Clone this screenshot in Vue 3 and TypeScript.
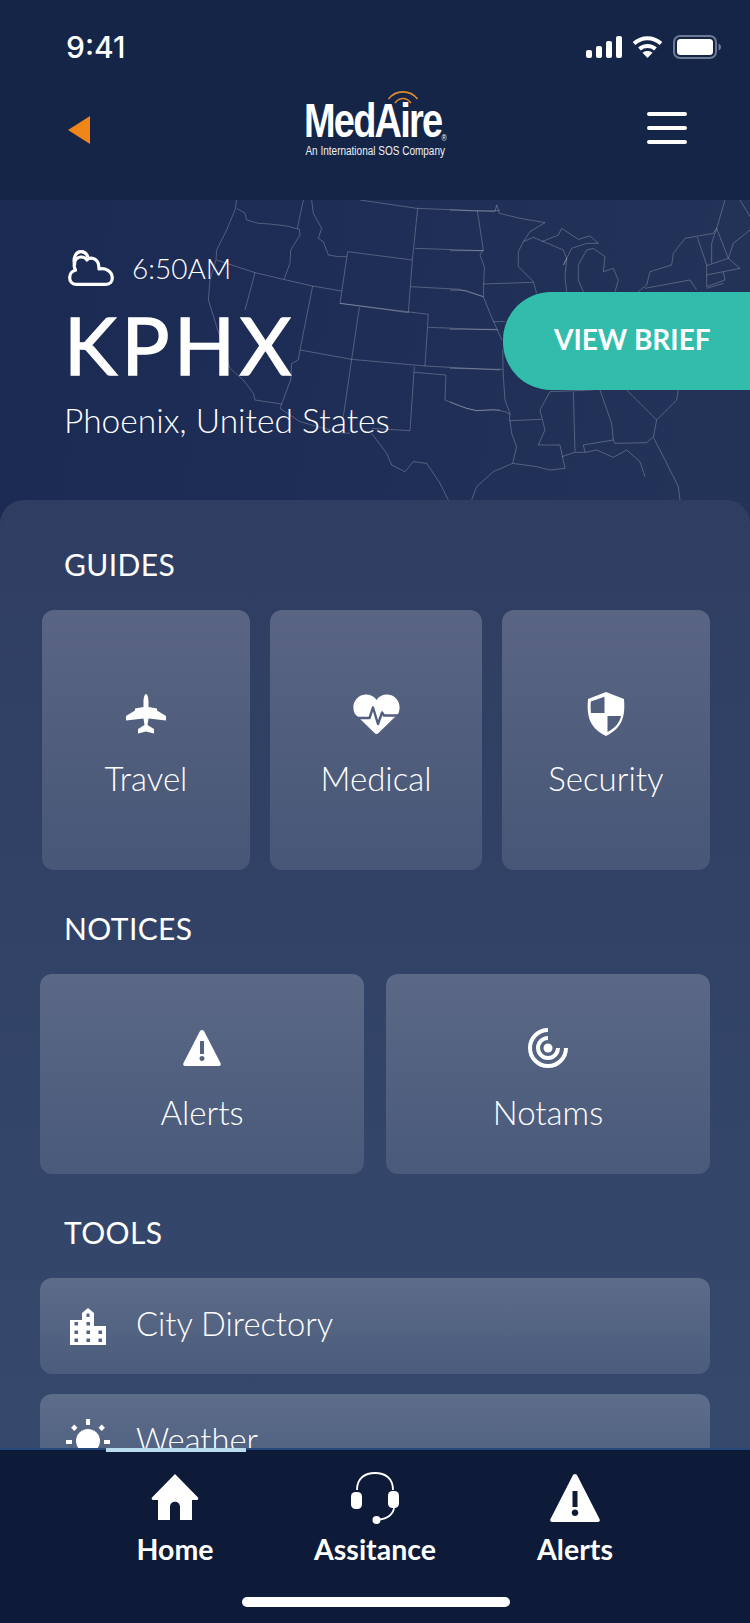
<script setup lang="ts">
const mapWest: string[] = [
  'M110 25L135 40L140 60L175 70L210 72L260 78L298 88',
  'M110 0L105 30L80 90L50 150L48 180L30 240L25 300L50 380L90 505L130 540L160 580L165 600L245 612',
  'M298 88L300 105L272 150L270 190L252 238',
  'M310 0L292 85',
  'M335 0L340 40L365 85L355 115L370 125L385 165L415 170L440 170',
  'M443 155L637 180L625 338L420 310Z',
  'M50 180L165 218L250 238L338 258L424 273',
  'M165 218L135 330',
  'M338 258L300 450L295 480L275 490L272 540L255 585L245 612L240 625L300 665L420 698L450 700',
  'M478 322L455 478L430 650',
  'M420 310L685 343L675 498',
  'M300 450L455 478L675 498L900 510',
  'M643 500L630 692L515 685',
  'M515 700L560 760L575 795L615 815L640 785L680 790L720 850L745 900',
  'M643 517L738 525L735 600L770 615L800 625L830 632L900 630',
  'M653 25L637 180',
  'M480 0L650 25L830 32L900 32',
  'M645 145L850 152',
  'M632 260L780 268L800 275L850 290',
  'M685 382L895 390',
]
const mapEast: string[] = [
  'M0 30L135 35L140 15L148 40L210 55L285 68L240 95L220 125',
  'M82 32L100 150L90 165L103 200L100 290',
  'M0 152L100 152',
  'M0 270L50 272L100 290L120 340L140 385L155 420',
  'M100 252L250 247',
  'M205 200L250 245L260 280',
  'M220 125L205 155L205 200',
  'M220 125L250 112L340 150L350 175L340 195L365 145L410 130L445 130L420 108L385 118L335 85L325 105L275 125',
  'M350 175L345 230L350 275',
  'M385 240L385 195L410 150L430 145L465 170L460 215L490 205L505 240L495 275',
  'M385 240L400 275',
  'M130 365L165 365',
  'M0 388L140 388',
  'M0 505L158 508',
  'M158 450L160 530L165 600L180 640L178 662L275 658',
  'M0 605L50 625L80 632L130 628L165 635L180 642',
  'M180 662L185 700L200 740L188 790L260 800L300 810L345 805L330 735L265 735L285 690L270 630L300 575L430 570',
  'M370 575L375 755',
  'M335 770L375 757L405 757L400 735L490 720L495 730L590 728L608 712',
  'M450 570L485 670L490 720',
  'M530 570L580 620L620 660',
  'M685 570L680 600L620 660L610 712L640 770L685 860L690 900',
  'M405 757L440 750L490 772L530 750L570 785L585 830',
  'M188 790L130 815L80 860L65 900',
  'M565 275L590 255L600 215L665 195L670 160L705 115L790 100L800 85L825 0',
  'M585 265L720 240L740 270',
  'M742 112L770 195L770 260',
  'M800 85L785 130L785 190',
  'M800 85L835 175L770 197',
  'M770 225L870 205L835 175',
  'M820 215L825 240L770 260',
  'M770 265L820 250',
  'M870 0L900 50',
  'M900 90L850 130L835 175',
]
</script>

<template>
  <div class="phone">
    <header class="top">
      <div class="status">
        <span class="time">9:41</span>
        <div class="status-icons">
          <svg width="36" height="22" viewBox="0 0 36 22" fill="#fff">
            <rect x="0" y="14" width="6" height="8" rx="2" />
            <rect x="10" y="10" width="6" height="12" rx="2" />
            <rect x="20" y="5" width="6" height="17" rx="2" />
            <rect x="30" y="0" width="6" height="22" rx="2" />
          </svg>
          <svg width="31" height="22" viewBox="0 0 31 22" fill="none" stroke="#fff" stroke-width="4">
            <path d="M2 7.5C10 0.5 21 0.5 29 7.5" />
            <path d="M7.5 13C12 9 19 9 23.500 13" />
            <path d="M15.5 22L10.500 16.800C13 14.500 18 14.500 20.500 16.800Z" fill="#fff" stroke="none" />
          </svg>
          <svg width="48" height="24" viewBox="0 0 48 24">
            <rect x="1" y="1" width="42" height="22" rx="6" fill="none" stroke="#6d7a96" stroke-width="2" />
            <rect x="4" y="4" width="36" height="16" rx="3.500" fill="#fff" />
            <path d="M45.500 8.500C47 9 48 10.500 48 12C48 13.500 47 15 45.500 15.500Z" fill="#6d7a96" />
          </svg>
        </div>
      </div>
      <div class="brandbar">
        <svg class="back" width="22" height="28" viewBox="0 0 22 28"><path d="M22 0V28L0 14Z" fill="#f0851a" /></svg>
        <div class="logo">
          <svg class="waves" width="32" height="18" viewBox="0 0 32 18" fill="none" stroke="#e08a2c" stroke-width="1.600">
            <path d="M1.500 11C9 1.500 23 1.500 30.500 11" />
            <path d="M8 15C12.500 9 19.500 9 24 15" />
          </svg>
          <span class="logo-name">MedAire<sup>®</sup></span>
          <span class="logo-tag">An International SOS Company</span>
        </div>
        <div class="burger"><i></i><i></i><i></i></div>
      </div>
    </header>

    <main class="main">
      <section class="hero">
        <svg class="map" width="750" height="300" viewBox="0 0 750 300" fill="none" stroke="#fff" stroke-opacity=".24" stroke-width="3" stroke-linejoin="round">
          <g transform="translate(200 0) scale(.33333)">
            <path v-for="d in mapWest" :key="d" :d="d" />
          </g>
          <g transform="translate(450 0) scale(.33333)">
            <path v-for="d in mapEast" :key="d" :d="d" />
          </g>
        </svg>
        <div class="weather-line">
          <svg width="46" height="36" viewBox="0 0 46 36" fill="none" stroke="#fff" stroke-width="3.200" stroke-linejoin="round">
            <path d="M8 34.300C3.800 34.300 1.700 31 1.700 27.500C1.700 23.500 4.500 20.800 7.500 20.200C4.500 14 7 7.500 13 7C17 6.800 18 8.500 19 10C22 6.800 29 7.800 30.500 14.500C31 17 31 18 31 19C37 17.500 44.300 21 44.300 28C44.300 31.500 42 34.300 38 34.300Z" />
            <path d="M7 15C4.500 9 7.500 1.700 13 1.700C17 1.700 19 4 20 7.500" />
          </svg>
          <span>6:50AM</span>
        </div>
        <h1 class="code">KPHX</h1>
        <p class="place">Phoenix, United States</p>
        <div class="brief">VIEW BRIEF</div>
      </section>

      <section class="panel">
        <h2 class="heading">GUIDES</h2>
        <div class="guides">
          <div class="card">
            <span class="icon-box">
              <svg width="42" height="40" viewBox="0 0 42 40" fill="#fff"><path d="M21 0C19.500 0 18.500 4 18.500 8V13L10 14.500V16.500L1 22V26.500L18.500 24.500L19.500 31L13 35V39.500L21 37.500L29 39.500V35L22.500 31L23.500 24.500L41 26.500V22L32 16.500V14.500L23.500 13V8C23.500 4 22.500 0 21 0Z" /></svg>
            </span>
            <span class="label">Travel</span>
          </div>
          <div class="card">
            <span class="icon-box">
              <svg width="47" height="40" viewBox="0 0 47 40">
                <path fill="#fff" d="M23.500 6C20 0.500 13 -1 7 2C1 5.500 -1.500 13 2 20L21.500 39C22.700 40.200 24.300 40.200 25.500 39L45 20C48.500 13 46 5.500 40 2C34 -1 27 0.500 23.500 6Z" />
                <path fill="none" stroke="#515e7e" stroke-width="2.400" stroke-linejoin="round" d="M1 24H16.500L20 13.500L25 30L29 18.500L31 21.500H46" />
              </svg>
            </span>
            <span class="label">Medical</span>
          </div>
          <div class="card">
            <span class="icon-box">
              <svg width="38" height="44" viewBox="0 0 38 44">
                <path fill="#fff" fill-rule="evenodd" d="M19 0L1 7C0 20 0 35 19 44C38 35 38 20 37 7ZM17.500 4.800V21H4C3.500 17 3.600 13 3.800 9.500ZM20.500 24H34C32.500 31 28 36 20.500 40Z" />
              </svg>
            </span>
            <span class="label">Security</span>
          </div>
        </div>

        <h2 class="heading notices">NOTICES</h2>
        <div class="duo">
          <div class="card small">
            <span class="icon-box">
              <svg width="38" height="36" viewBox="0 0 38 36">
                <path fill="#fff" fill-rule="evenodd" d="M19 0C17.800 0 17 .8 16.500 2L.5 33C-.3 34.800 .5 36 2 36H36C37.500 36 38.300 34.800 37.500 33L21.500 2C21 .8 20.200 0 19 0ZM17 11H21V24H17ZM19 26C20.500 26 21.500 27 21.500 28.500C21.500 30 20.500 31 19 31C17.500 31 16.500 30 16.500 28.500C16.500 27 17.500 26 19 26Z" />
              </svg>
            </span>
            <span class="label">Alerts</span>
          </div>
          <div class="card small">
            <span class="icon-box">
              <svg width="40" height="40" viewBox="0 0 40 40" fill="none" stroke="#fff" stroke-width="4">
                <path d="M20 2A18 18 0 1 0 38 20" />
                <path d="M20 10A10 10 0 1 0 30 20" />
                <circle cx="20" cy="20" r="4.500" fill="#fff" stroke="none" />
              </svg>
            </span>
            <span class="label">Notams</span>
          </div>
        </div>

        <h2 class="heading tools">TOOLS</h2>
        <div class="rows">
          <div class="row">
            <span class="row-icon">
              <svg width="36" height="37" viewBox="0 0 36 37">
                <path fill="#fff" fill-rule="evenodd" d="M18 0L12 5V12H0V37H36V18H24V5ZM16.500 5.500H19.500V9H16.500ZM4.500 14H8V17.500H4.500ZM16.500 14H20V17.500H16.500ZM4.500 22.500H8V26H4.500ZM16.500 22.500H20V26H16.500ZM28.500 22.500H32V26H28.500ZM4.500 30.500H8V34H4.500ZM16.500 30.500H20V34H16.500ZM28.500 30.500H32V34H28.500Z" />
              </svg>
            </span>
            <span class="row-label">City Directory</span>
          </div>
          <div class="row">
            <span class="row-icon">
              <svg class="sun" width="44" height="38" viewBox="0 0 44 38" fill="#fff">
                <rect x="20" y="0" width="4" height="6" />
                <rect x="6" y="6.500" width="4.500" height="4.500" transform="rotate(45 8.250 8.750)" />
                <rect x="33.500" y="6.500" width="4.500" height="4.500" transform="rotate(45 35.750 8.750)" />
                <rect x="0" y="21" width="6" height="4" />
                <rect x="38" y="21" width="6" height="4" />
                <circle cx="22" cy="22" r="12" />
              </svg>
            </span>
            <span class="row-label">Weather</span>
          </div>
        </div>
      </section>
    </main>

    <nav class="tabbar">
      <i class="indicator"></i>
      <div class="tabs">
        <div class="tab">
          <svg width="48" height="48" viewBox="0 0 48 48" fill="#fff">
            <path fill-rule="evenodd" d="M24 0L47 23.500C47.800 24.500 47 26 46 26H41V46H29V33C29 26 19 26 19 33V46H7V26H2C1 26 .2 24.500 1 23.500Z" />
          </svg>
          <span>Home</span>
        </div>
        <div class="tab">
          <svg width="48" height="52" viewBox="0 0 48 52">
            <path fill="none" stroke="#fff" stroke-width="1.800" d="M6 18C6 6 14 1 24 1C34 1 42 6 42 18" />
            <path fill="none" stroke="#fff" stroke-width="1.800" d="M43 24V35C43 42 36 47 28 47.500" />
            <rect x="0" y="20" width="11" height="17" rx="4.500" fill="#fff" />
            <rect x="37" y="19" width="11" height="17" rx="4.500" fill="#fff" />
            <circle cx="25.500" cy="48" r="4" fill="#fff" />
          </svg>
          <span>Assitance</span>
        </div>
        <div class="tab">
          <svg width="50" height="48" viewBox="0 0 50 48">
            <path fill="#fff" fill-rule="evenodd" d="M25 0C23.800 0 23 .8 22.500 2L.5 45C-.3 46.800 .5 48 2 48H48C49.500 48 50.300 46.800 49.500 45L27.500 2C27 .8 26.200 0 25 0ZM22.500 17H27.500V33H22.500ZM25 35.500C27 35.500 28.300 36.800 28.300 38.700C28.300 40.600 27 42 25 42C23 42 21.700 40.600 21.700 38.700C21.700 36.800 23 35.500 25 35.500Z" />
          </svg>
          <span>Alerts</span>
        </div>
      </div>
      <div class="homebar"></div>
    </nav>
  </div>
</template>

<style scoped>
.phone {
  width: 750px;
  height: 1623px;
  display: flex;
  flex-direction: column;
  overflow: hidden;
  position: relative;
  background: #2f3d62;
  color: #fff;
  font-family: Lato, "Open Sans", sans-serif;
}
.top {
  height: 200px;
  flex: none;
  background: #142548;
  box-sizing: border-box;
  padding-top: 29px;
}
.status {
  height: 36px;
  padding: 0 29px 0 66px;
  display: flex;
  align-items: center;
  justify-content: space-between;
}
.time {
  font: 500 30px/36px Inter, sans-serif;
}
.status-icons {
  display: flex;
  align-items: center;
  gap: 10px;
}
.brandbar {
  margin-top: 23px;
  padding: 0 63px 0 68px;
  height: 84px;
  display: flex;
  align-items: center;
  justify-content: space-between;
}
.back {
  margin-top: 0;
}
.logo {
  width: 142px;
  height: 84px;
  margin-left: 13px;
  display: flex;
  flex-direction: column;
  align-items: center;
  position: relative;
  font-family: "Liberation Sans", Arial, sans-serif;
}
.waves {
  position: absolute;
  left: 83px;
  top: 0;
}
.logo-name {
  margin-top: 7px;
  height: 52px;
  font-size: 48px;
  line-height: 52px;
  font-weight: 700;
  letter-spacing: -2.2px;
  white-space: nowrap;
  transform: scaleX(.79);
}
.logo-name sup {
  font-size: 9px;
  line-height: 0;
  font-weight: 400;
  letter-spacing: 0;
  vertical-align: -4px;
}
.logo-tag {
  margin-top: -4px;
  font-size: 12.500px;
  line-height: 16px;
  white-space: nowrap;
  transform: scaleX(.8);
  color: #eef0f4;
}
.burger {
  width: 40px;
  display: flex;
  flex-direction: column;
  gap: 10px;
  margin-top: -4px;
}
.burger i {
  display: block;
  height: 4px;
  border-radius: 2px;
  background: #fff;
}
.main {
  flex: 1;
  min-height: 0;
  overflow: hidden;
}
.hero {
  height: 324px;
  position: relative;
  box-sizing: border-box;
  padding: 49px 0 0 65px;
  background: linear-gradient(100deg, #1b2a52 0%, #1e2d56 40%, #243358 100%);
}
.map {
  position: absolute;
  left: 0;
  top: 0;
}
.weather-line,
.code,
.place {
  position: relative;
}
.weather-line {
  height: 38px;
  padding-left: 3px;
  display: flex;
  align-items: center;
  gap: 18px;
  font-size: 28px;
  font-weight: 300;
}
.code {
  margin: 11px 0 0 -1px;
  font-size: 80px;
  line-height: 92px;
  font-weight: 400;
  letter-spacing: 4.5px;
  -webkit-text-stroke: 1.4px #fff;
}
.place {
  margin: 8px 0 0 -1px;
  font-size: 33.500px;
  line-height: 44px;
  font-weight: 300;
}
.brief {
  position: absolute;
  right: 0;
  top: 92px;
  width: 247px;
  height: 98px;
  box-sizing: border-box;
  padding: 0 0 4px 51px;
  display: flex;
  align-items: center;
  border-radius: 48px 0 0 48px;
  background: #32bcac;
  font-size: 28px;
  font-weight: 700;
  white-space: nowrap;
}
.panel {
  position: relative;
  margin-top: -24px;
  height: 960px;
  box-sizing: border-box;
  padding: 44px 40px 0;
  border-radius: 24px 24px 0 0;
  background: linear-gradient(180deg, #2f3d62 0%, #35496d 100%);
}
.heading {
  margin: 0 0 26px 24px;
  font-size: 30px;
  line-height: 40px;
  font-weight: 400;
  letter-spacing: .4px;
}
.heading.notices {
  margin-top: 38px;
  margin-bottom: 26px;
}
.heading.tools {
  margin-top: 38px;
}
.guides {
  display: grid;
  grid-template-columns: 208px 212px 208px;
  gap: 20px;
  margin-left: 2px;
}
.duo {
  display: grid;
  grid-template-columns: 1fr 1fr;
  gap: 22px;
}
.card {
  height: 260px;
  box-sizing: border-box;
  padding-top: 82px;
  display: flex;
  flex-direction: column;
  align-items: center;
  border-radius: 12px;
  background: linear-gradient(180deg, rgba(255, 255, 255, .2), rgba(255, 255, 255, .11));
  font-size: 33px;
  font-weight: 300;
}
.icon-box {
  height: 44px;
  display: flex;
  align-items: center;
  justify-content: center;
  flex: none;
}
.label {
  margin-top: 20px;
  line-height: 44px;
}
.card.small {
  height: 200px;
  padding-top: 52px;
}
.card.small .label {
  margin-top: 20px;
}
.rows {
  display: flex;
  flex-direction: column;
  gap: 20px;
}
.row {
  height: 96px;
  display: flex;
  align-items: center;
  border-radius: 12px;
  background: linear-gradient(180deg, rgba(255, 255, 255, .2), rgba(255, 255, 255, .11));
  font-size: 32.700px;
  font-weight: 300;
}
.row-label {
  padding-bottom: 5px;
}
.row-icon {
  width: 96px;
  height: 40px;
  display: flex;
  align-items: center;
  justify-content: center;
}
.sun {
  margin-top: -8px;
}
.tabbar {
  height: 175px;
  flex: none;
  position: relative;
  box-sizing: border-box;
  border-top: 2px solid #24497a;
  background: #0d1b38;
}
.indicator {
  position: absolute;
  left: 106px;
  top: -2px;
  width: 140px;
  height: 4px;
  background: #b9dcef;
}
.tabs {
  display: grid;
  grid-template-columns: repeat(3, 200px);
  padding: 22px 0 0 75px;
}
.tab {
  display: flex;
  flex-direction: column;
  align-items: center;
  font-size: 28.500px;
  font-weight: 700;
}
.tab svg {
  height: 52px;
  flex: none;
}
.tab span {
  margin-top: 5px;
  line-height: 40px;
}
.homebar {
  position: absolute;
  left: 242px;
  top: 147px;
  width: 268px;
  height: 10px;
  border-radius: 5px;
  background: #fff;
}
</style>
